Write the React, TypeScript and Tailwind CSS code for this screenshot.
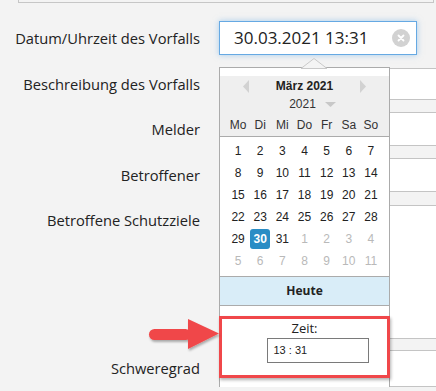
import React from 'react';

const labelFont = { fontFamily: '"Open Sans", "Liberation Sans", sans-serif' };

const Calendar = () => {
  const days = ['Mo', 'Di', 'Mi', 'Do', 'Fr', 'Sa', 'So'];
  const cells: { d: number; muted: boolean }[] = [];
  for (let i = 1; i <= 31; i++) cells.push({ d: i, muted: false });
  for (let i = 1; i <= 11; i++) cells.push({ d: i, muted: true });

  return (
    <div className="absolute left-[219px] top-[67px] w-[171px] h-[320px] bg-white border border-[#ababab] border-b-0 font-['Liberation_Sans',sans-serif]">
      {/* caret */}
      <svg className="absolute left-[80px] -top-[10px]" width="28" height="11" viewBox="0 0 28 11">
        <polygon points="1,10.5 14,0.5 27,10.5" fill="#f4f4f4" stroke="#c9c9c9" />
      </svg>

      {/* header */}
      <div className="bg-[#efefef] border-b border-[#ababab] px-[7px]">
        <div className="h-[20px] mt-[8px] flex items-center justify-between px-[16px]">
          <svg width="6" height="13" viewBox="0 0 6 13">
            <polygon points="6,0 0,6.5 6,13" fill="#d2d2d2" />
          </svg>
          <span className="text-[12px] font-bold text-[#222]">März 2021</span>
          <svg width="6" height="13" viewBox="0 0 6 13">
            <polygon points="0,0 6,6.5 0,13" fill="#d2d2d2" />
          </svg>
        </div>
        <div className="h-[16px] flex items-center justify-center gap-[9px] pl-[16px]">
          <span className="text-[12px] text-[#333]">2021</span>
          <svg width="11" height="5" viewBox="0 0 11 5">
            <polygon points="0,0 11,0 5.5,5" fill="#c8c8c8" />
          </svg>
        </div>
        <div className="grid grid-cols-7 h-[22px] mt-[2px] items-center">
          {days.map((d) => (
            <span key={d} className="text-center text-[12px] text-[#333]">{d}</span>
          ))}
        </div>
      </div>

      {/* days */}
      <div className="grid grid-cols-7 px-[7px] pt-[3px]">
        {cells.map((c, i) => (
          <div key={i} className="h-[22px] flex items-center justify-center">
            {!c.muted && c.d === 30 ? (
              <span className="w-[20px] h-[20px] rounded-[3px] bg-[#2a8dc5] text-white font-bold text-[12px] flex items-center justify-center">30</span>
            ) : (
              <span className={c.muted ? 'text-[12px] text-[#b9b9b9]' : 'text-[12px] text-[#222]'}>{c.d}</span>
            )}
          </div>
        ))}
      </div>

      {/* today */}
      <div className="mt-[4px] h-[30px] bg-[#d9edf8] border-y border-[#ababab] flex items-center justify-center">
        <span className="text-[12px] font-bold text-[#222]" style={labelFont}>Heute</span>
      </div>

      {/* time */}
      <div className="mt-[10px] flex flex-col items-center">
        <span className="text-[13px] text-[#222] leading-[18px] mt-[3px]" style={labelFont}>Zeit:</span>
        <div className="mt-[1px] ml-[26px] w-[102px] h-[25px] border border-[#7a7a7a] bg-white flex items-center px-[6px]">
          <span className="text-[11px] text-[#222]">13 : 31</span>
        </div>
      </div>
    </div>
  );
};

const Row = ({ label, h, mt, top }: { label: string; h: string; mt: string; top?: boolean }) => (
  <div className={`flex ${mt} ${h} ${top ? 'items-start' : 'items-center'}`}>
    <div className={`w-[200px] shrink-0 text-right text-[14.7px] text-[#222] ${top ? 'pt-[3px] leading-[24px]' : ''}`} style={labelFont}>
      {label}
    </div>
    <div className="ml-[19px] w-[240px] h-full shrink-0 bg-white border border-[#c4c4c4]" />
  </div>
);

const App = () => {
  return (
    <div className="relative w-[436px] h-[391px] overflow-hidden bg-[#f3f3f3]">
      <div className="ml-[18px] mr-[2px] h-[3px] border-x border-b border-[#c6c6c6]" />

      <div className="flex mt-[18px] h-[34px] items-center">
        <div className="w-[200px] shrink-0 text-right text-[14.7px] text-[#222]" style={labelFont}>
          Datum/Uhrzeit des Vorfalls
        </div>
        <div className="relative ml-[19px] w-[198px] h-full shrink-0 bg-white border border-[#66a9e3] shadow-[0_0_6px_rgba(102,169,227,0.55)] flex items-center pl-[14px]">
          <span className="text-[17px] text-[#222]" style={labelFont}>30.03.2021 13:31</span>
          <span className="absolute right-[6px] top-[7px] w-[18px] h-[18px] rounded-full bg-[#d2d2d2] flex items-center justify-center">
            <svg width="8" height="8" viewBox="0 0 8 8">
              <path d="M1.5 1.5 L6.5 6.5 M6.5 1.5 L1.5 6.5" stroke="#fff" strokeWidth="1.8" strokeLinecap="round" />
            </svg>
          </span>
        </div>
      </div>

      <Row label="Beschreibung des Vorfalls" h="h-[32px]" mt="mt-[13px]" />
      <Row label="Melder" h="h-[34px]" mt="mt-[12px]" />
      <Row label="Betroffener" h="h-[34px]" mt="mt-[12px]" />
      <Row label="Betroffene Schutzziele" h="h-[134px]" mt="mt-[13px]" top />
      <Row label="Schweregrad" h="h-[37px]" mt="mt-[11px]" />

      <Calendar />

      {/* annotation */}
      <div className="absolute left-[219px] top-[316px] w-[171px] h-[62px] border-[3px] border-[#f0474a] shadow-[1px_2px_3px_rgba(0,0,0,0.3)]" />
      <svg className="absolute left-[144px] top-[314px]" width="80" height="40" viewBox="0 0 80 40">
        <defs>
          <filter id="sh" x="-20%" y="-20%" width="140%" height="160%">
            <feDropShadow dx="1" dy="2" stdDeviation="1.2" floodColor="#000" floodOpacity="0.3" />
          </filter>
        </defs>
        <g filter="url(#sh)">
          <rect x="5" y="15" width="42" height="11" rx="5.5" fill="#f0474a" />
          <polygon points="44,5 75,19.5 44,35" fill="#f0474a" />
        </g>
      </svg>
    </div>
  );
};

export default App;
